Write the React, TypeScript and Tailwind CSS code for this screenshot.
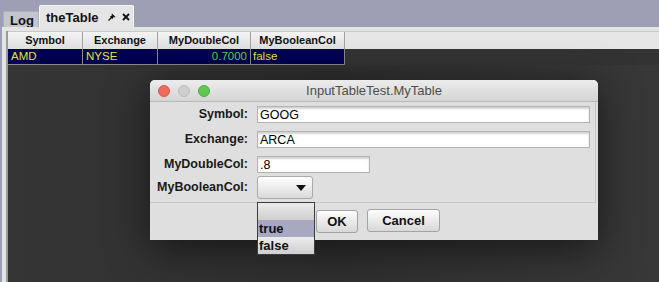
import React from 'react';

const font = "font-['Liberation_Sans',Arial,sans-serif]";

const columns = [
    { name: 'Symbol', width: 'w-[75px]' },
    { name: 'Exchange', width: 'w-[75px]' },
    { name: 'MyDoubleCol', width: 'w-[93px]' },
    { name: 'MyBooleanCol', width: 'w-[94px]' },
];

const Field: React.FC<{ value: string; width: string }> = ({ value, width }) => (
    <div
        className={`${width} h-[17px] bg-white border border-[#b3b3b3] shadow-[inset_0_2px_2px_rgba(0,0,0,0.18)] text-[12.5px] leading-[16px] pl-[2px] text-black`}
    >
        {value}
    </div>
);

const FormLabel: React.FC<{ text: string }> = ({ text }) => (
    <div className="w-[98px] text-right text-[12.5px] font-bold text-[#1a1a1a]">{text}</div>
);

export default function App() {
    return (
        <div className={`relative w-[659px] h-[282px] overflow-hidden bg-[#9e9fb5] flex flex-col ${font}`}>
            {/* Tabs */}
            <div className="h-[27px] flex items-end pl-[3px] shrink-0">
                <div className="w-[36px] h-[16px] bg-[#c5c5ce] border border-b-0 border-[#aeaeb8] rounded-t-[2px] text-[13px] font-bold leading-[18px] pl-[6px] text-[#111]">
                    Log
                </div>
                <div className="w-[95px] h-[22px] bg-[#e5e5e5] border border-b-0 border-[#f6f6f6] rounded-t-[2px] flex items-center pl-[6px] text-[13px] font-bold text-[#111]">
                    <span className="mt-[2px]">theTable</span>
                    <svg width="8" height="8" viewBox="0 0 8 8" className="ml-[9px] mt-[1px]">
                        <path d="M4 0.5 L7.5 4 L6.5 4.5 L3.5 1.5 Z" fill="#111" />
                        <path d="M4.8 1.8 L6.2 3.2 L4.2 6.2 L1.8 3.8 Z" fill="#111" />
                        <path d="M3 5 L0.5 7.5" stroke="#111" strokeWidth="1.2" />
                    </svg>
                    <svg width="8" height="8" viewBox="0 0 8 8" className="ml-[6px] mt-[1px]">
                        <path d="M1 1 L7 7 M7 1 L1 7" stroke="#111" strokeWidth="1.8" />
                    </svg>
                </div>
            </div>

            {/* Body */}
            <div className="flex-1 flex bg-[#e4e4e4] ml-[2px] pt-[4px] pl-[4px]">
                <div className="flex-1 flex flex-col bg-[#333333] border-l-2 border-[#9b9b9b]">
                    <div className="h-[18px] flex bg-gradient-to-b from-[#f4f4f4] to-[#dedede] border-t border-[#c8c8c8]">
                        {columns.map((c) => (
                            <div
                                key={c.name}
                                className={`${c.width} border-r border-[#a2a2a2] text-center text-[11px] font-bold leading-[17px] text-[#111]`}
                            >
                                {c.name}
                            </div>
                        ))}
                        <div className="flex-1 bg-[#e6e6e6]" />
                    </div>
                    <div className="h-[16px] flex text-[11.5px] leading-[15px]">
                        <div className="w-[75px] bg-[#00004f] border-r border-b border-[#8a8a8a] pl-[3px] text-[#e4e43c]">AMD</div>
                        <div className="w-[75px] bg-[#00004f] border-r border-b border-[#8a8a8a] pl-[3px] text-[#e4e43c]">NYSE</div>
                        <div className="w-[93px] bg-[#00004f] border-r border-b border-[#8a8a8a] pr-[3px] text-right text-[#4fd94f]">0.7000</div>
                        <div className="w-[94px] bg-[#00004f] border-r border-b border-[#8a8a8a] pl-[2px] text-[#e4e43c]">false</div>
                    </div>
                    <div className="flex-1 bg-gradient-to-r from-[#353535] via-[#2f2f2f] to-[#383838]" />
                </div>
            </div>

            {/* Dialog window */}
            <div className="absolute left-[150px] top-[80px] w-[448px] h-[160px] rounded-t-[5px] bg-[#dfdfdf] flex flex-col shadow-[0_8px_40px_rgba(0,0,0,0.55)]">
                <div className="relative h-[22px] rounded-t-[5px] bg-gradient-to-b from-[#ececec] to-[#d5d5d5] border-b border-[#b8b8b8] flex items-center">
                    <div className="flex gap-[8px] pl-[8px]">
                        <div className="w-[12px] h-[12px] rounded-full bg-[#ee6a5f] border border-[#d9574c]" />
                        <div className="w-[12px] h-[12px] rounded-full bg-[#cecece] border border-[#bdbdbd]" />
                        <div className="w-[12px] h-[12px] rounded-full bg-[#62c655] border border-[#52ad45]" />
                    </div>
                    <div className="absolute inset-0 text-center text-[13px] leading-[22px] text-[#4d4d4d]">
                        InputTableTest.MyTable
                    </div>
                </div>

                <div className="h-[101px] border-r border-b border-[#c6c6c6] mr-[2px] pt-[4px] flex flex-col">
                    <div className="flex items-center gap-[9px] h-[17px]">
                        <FormLabel text="Symbol:" />
                        <Field value="GOOG" width="w-[333px]" />
                    </div>
                    <div className="flex items-center gap-[9px] h-[17px] mt-[8px]">
                        <FormLabel text="Exchange:" />
                        <Field value="ARCA" width="w-[333px]" />
                    </div>
                    <div className="flex items-center gap-[9px] h-[17px] mt-[8px]">
                        <FormLabel text="MyDoubleCol:" />
                        <Field value=".8" width="w-[113px]" />
                    </div>
                    <div className="flex items-center gap-[9px] h-[23px] mt-[3px]">
                        <FormLabel text="MyBooleanCol:" />
                        <div className="w-[56px] h-[23px] rounded-[3px] border border-[#a9a9a9] bg-gradient-to-b from-[#ffffff] to-[#d9d9d9] flex items-center justify-end pr-[6px]">
                            <svg width="10" height="6" viewBox="0 0 10 6">
                                <path d="M0 0 L10 0 L5 6 Z" fill="#111" />
                            </svg>
                        </div>
                    </div>
                </div>

                <div className="flex-1 flex items-start pt-[7px] pl-[166px] gap-[9px]">
                    <button className="w-[42px] h-[23px] rounded-[3px] border border-[#a3a3a3] bg-gradient-to-b from-[#fdfdfd] to-[#d8d8d8] text-[13px] font-bold text-[#111]">
                        OK
                    </button>
                    <button className="w-[73px] h-[23px] rounded-[3px] border border-[#a3a3a3] bg-gradient-to-b from-[#fdfdfd] to-[#d8d8d8] text-[13px] font-bold text-[#111] -mt-[1px]">
                        Cancel
                    </button>
                </div>
            </div>

            {/* Combo popup */}
            <div className="absolute left-[257px] top-[202px] w-[58px] h-[53px] border border-[#3c3c3c] flex flex-col text-[13px] font-bold text-[#111] leading-[17px]">
                <div className="h-[17px] bg-gradient-to-b from-[#ececec] to-[#cfcfcf]" />
                <div className="h-[17px] bg-[#a8a8c1] pl-[1px]">true</div>
                <div className="h-[17px] bg-gradient-to-b from-[#ececec] to-[#cfcfcf] pl-[1px]">false</div>
            </div>
        </div>
    );
}
